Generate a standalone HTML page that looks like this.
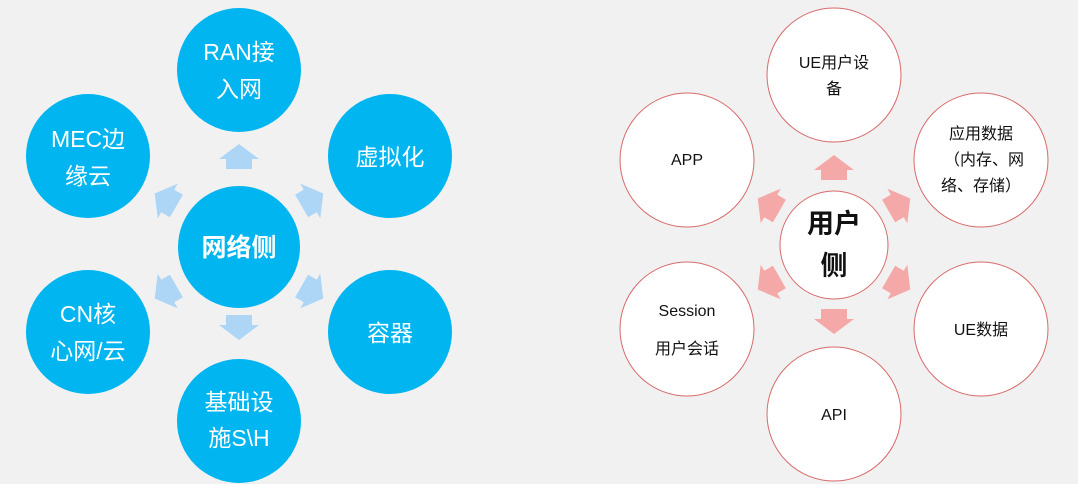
<!DOCTYPE html>
<html><head><meta charset="utf-8"><style>
html,body{margin:0;padding:0;background:#f1f1f1;width:1078px;height:484px;overflow:hidden}
svg{display:block}
text{font-family:"Liberation Sans","Noto Sans CJK SC",sans-serif}
</style></head><body>
<svg width="1078" height="484" viewBox="0 0 1078 484">
<defs>
<polygon id="ar" points="0,-13 20,2 13,2 13,12 -13,12 -13,2 -20,2"/>
</defs>
<rect width="1078" height="484" fill="#f1f1f1"/>
<g fill="#00b5f0">
<circle cx="239" cy="70" r="62"/>
<circle cx="88" cy="156" r="62"/>
<circle cx="390" cy="156" r="62"/>
<circle cx="239" cy="247" r="61"/>
<circle cx="88" cy="332" r="62"/>
<circle cx="390" cy="332" r="62"/>
<circle cx="239" cy="421" r="62"/>
</g>
<g fill="#acd5f6">
<use href="#ar" transform="translate(239,157)"/>
<use href="#ar" transform="translate(239,327) rotate(180)"/>
<use href="#ar" transform="translate(166,200) rotate(-60)"/>
<use href="#ar" transform="translate(312,200) rotate(60)"/>
<use href="#ar" transform="translate(166,292) rotate(-120)"/>
<use href="#ar" transform="translate(312,292) rotate(120)"/>
</g>
<g fill="#fff" font-size="23" text-anchor="middle">
<text x="239" y="60">RAN接</text><text x="239" y="97">入网</text>
<text x="88" y="147">MEC边</text><text x="88" y="184">缘云</text>
<text x="390" y="165">虚拟化</text>
<text x="88" y="322">CN核</text><text x="88" y="359">心网/云</text>
<text x="390" y="341">容器</text>
<text x="239" y="410">基础设</text><text x="239" y="446">施S\H</text>
<text x="239" y="256" font-weight="bold" font-size="25">网络侧</text>
</g>
<g fill="#fff" stroke="#d86a6a" stroke-width="1">
<circle cx="834" cy="75" r="67"/>
<circle cx="687" cy="160" r="67"/>
<circle cx="981" cy="160" r="67"/>
<circle cx="834" cy="245" r="54"/>
<circle cx="687" cy="329" r="67"/>
<circle cx="981" cy="329" r="67"/>
<circle cx="834" cy="414" r="67"/>
</g>
<g fill="#f5a8a8">
<use href="#ar" transform="translate(834,168)"/>
<use href="#ar" transform="translate(834,321) rotate(180)"/>
<use href="#ar" transform="translate(769,205) rotate(-60)"/>
<use href="#ar" transform="translate(899,205) rotate(60)"/>
<use href="#ar" transform="translate(769,283) rotate(-120)"/>
<use href="#ar" transform="translate(899,283) rotate(120)"/>
</g>
<g fill="#111" font-size="16" text-anchor="middle">
<text x="834" y="68">UE用户设</text><text x="834" y="94">备</text>
<text x="687" y="165">APP</text>
<text x="981" y="139">应用数据</text><text x="984" y="165">（内存、网</text><text x="981" y="191">络、存储）</text>
<text x="687" y="316">Session</text><text x="687" y="354">用户会话</text>
<text x="981" y="335">UE数据</text>
<text x="834" y="420">API</text>
<text x="834" y="233" font-weight="bold" font-size="27">用户</text>
<text x="834" y="275" font-weight="bold" font-size="27">侧</text>
</g>
</svg>
</body></html>
